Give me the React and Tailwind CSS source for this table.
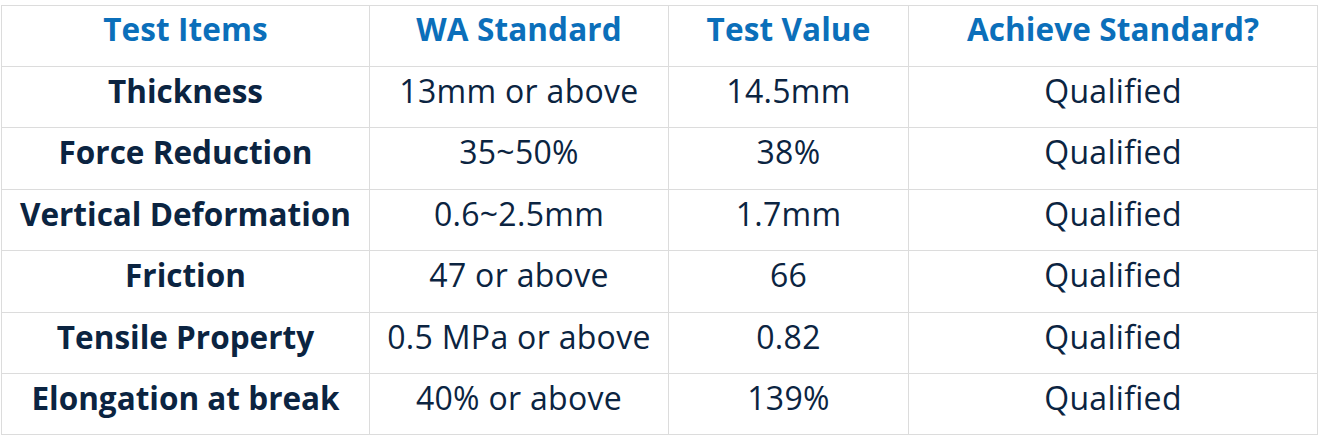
const rows = [
  ['Thickness', '13mm or above', '14.5mm', 'Qualified'],
  ['Force Reduction', '35~50%', '38%', 'Qualified'],
  ['Vertical Deformation', '0.6~2.5mm', '1.7mm', 'Qualified'],
  ['Friction', '47 or above', '66', 'Qualified'],
  ['Tensile Property', '0.5 MPa or above', '0.82', 'Qualified'],
  ['Elongation at break', '40% or above', '139%', 'Qualified'],
];

const headers = ['Test Items', 'WA Standard', 'Test Value', 'Achieve Standard?'];

export default function App() {
  return (
    <div className="bg-white w-[1318px] h-[437px] pt-[5px] pl-[1px]" style={{ fontFamily: '"Open Sans", "Noto Sans", sans-serif' }}>
      <table className="border-collapse table-fixed w-[1316px]">
        <colgroup>
          <col className="w-[368px]" />
          <col className="w-[299px]" />
          <col className="w-[240px]" />
          <col className="w-[409px]" />
        </colgroup>
        <thead>
          <tr>
            {headers.map((h) => (
              <th key={h} className="h-[61px] border border-[#dcdcdc] text-center align-top pt-[4px] text-[31.5px] leading-[38px] font-bold tracking-[0.1px] text-[#0b6fba]">
                {h}
              </th>
            ))}
          </tr>
        </thead>
        <tbody>
          {rows.map((r, i) => (
            <tr key={i}>
              {r.map((c, j) => (
                <td
                  key={j}
                  className={`h-[61.4px] border border-[#dcdcdc] text-center align-top pt-[5px] leading-[38px] text-[#0b2441] ${j === 0 ? 'font-bold text-[31.5px]' : 'font-normal text-[32px] tracking-[0.3px]'}`}
                >
                  {c}
                </td>
              ))}
            </tr>
          ))}
        </tbody>
      </table>
    </div>
  );
}
